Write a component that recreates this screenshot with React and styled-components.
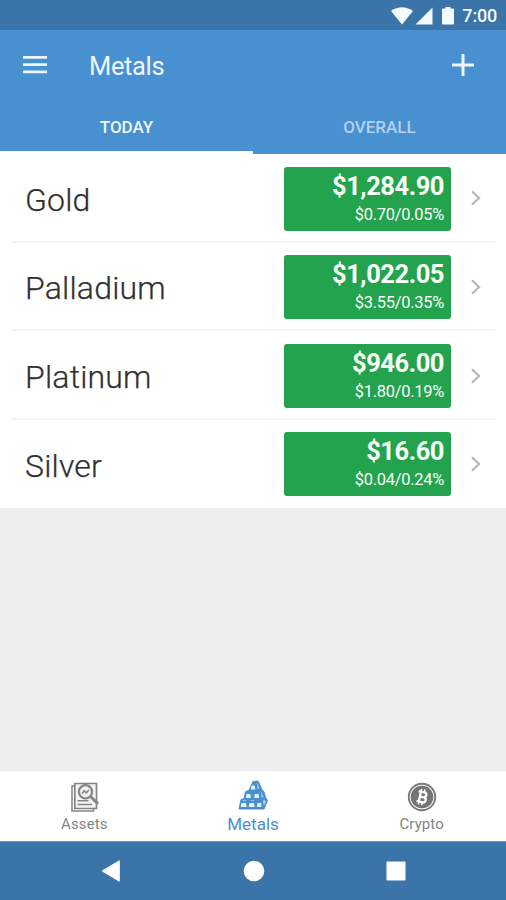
import React, { Component } from 'react';
import styled, { createGlobalStyle } from 'styled-components';

const GlobalStyle = createGlobalStyle`
  * {
    box-sizing: border-box;
  }

  body {
    margin: 0;
    background-color: #eeeeee;
    font-family: Roboto, 'Liberation Sans', sans-serif;
  }
`;

const Screen = styled.div`
  display: flex;
  flex-direction: column;
  width: 506px;
  height: 900px;
  overflow: hidden;
`;

const StatusBar = styled.div`
  display: flex;
  flex: none;
  align-items: center;
  justify-content: flex-end;
  height: 30px;
  padding: 1px 9px 0 0;
  background-color: #3b74a8;
  color: #f4f9fd;
`;

const StatusIcons = styled.svg`
  display: block;
  margin-right: 7px;
`;

const Clock = styled.span`
  font-size: 18px;
  font-weight: 500;
  letter-spacing: -0.2px;
  line-height: 29px;
`;

const Header = styled.header`
  flex: none;
  height: 124px;
  background-color: #4990d1;
  color: #eef6fd;
`;

const Toolbar = styled.div`
  display: flex;
  align-items: center;
  height: 70px;
  padding: 0 32px 0 23px;
`;

const ToolbarButton = styled.button`
  display: flex;
  padding: 0;
  border: 0;
  background: none;
  color: inherit;
`;

const Title = styled.h1`
  flex: 1;
  margin: 1px 0 0 42px;
  font-size: 25.5px;
  font-weight: 400;
  letter-spacing: -0.35px;
  line-height: 32px;
`;

const Tabs = styled.div`
  display: flex;
  height: 54px;
`;

const Tab = styled.button`
  flex: 1;
  padding: 2px 0 0;
  border: 0;
  border-bottom: ${props => (props.$active ? '3px solid #fff' : '3px solid transparent')};
  background: none;
  color: ${props => (props.$active ? '#eef6fd' : '#b0d2f0')};
  font-family: inherit;
  font-size: 17px;
  font-weight: 500;
`;

const List = styled.ul`
  flex: none;
  margin: 0;
  padding: 0 11px 0 12px;
  background-color: #fff;
  list-style: none;
`;

const Row = styled.li`
  display: flex;
  align-items: center;
  height: 88.6px;
  padding: 0 14px 0 13px;
  border-bottom: 2px solid #f5f5f5;

  &:last-child {
    border-bottom-color: transparent;
  }
`;

const Name = styled.span`
  flex: 1;
  margin-top: 5px;
  color: #303030;
  font-size: 32px;
  font-weight: 300;
  letter-spacing: 0.2px;
  line-height: 40px;
  -webkit-text-stroke: 0.25px #303030;
`;

const Badge = styled.div`
  width: 167px;
  height: 64px;
  margin: 2.6px 20px 0 0;
  padding: 4px 7px 0 0;
  border-radius: 3px;
  background-color: #24a34e;
  color: #f8fff9;
  text-align: right;
`;

const Price = styled.div`
  font-size: 25.5px;
  font-weight: 700;
  letter-spacing: -0.45px;
  line-height: 31px;
`;

const Change = styled.div`
  font-size: 16.5px;
  letter-spacing: -0.3px;
  line-height: 25px;
`;

const Chevron = styled.svg`
  display: block;
  margin-top: 2.4px;
`;

const Content = styled.main`
  flex: 1;
  background-color: #eeeeee;
`;

const BottomBar = styled.nav`
  display: flex;
  flex: none;
  height: 70px;
  border-top: 1px solid #f6f6f6;
  background-color: #fff;
`;

const BottomItem = styled.a`
  display: flex;
  flex: 1;
  flex-direction: column;
  align-items: center;
  padding-top: ${props => (props.$active ? '7px' : '10px')};
  color: ${props => (props.$active ? '#4a90d0' : '#858585')};
  font-size: ${props => (props.$active ? '17px' : '15px')};
  letter-spacing: ${props => (props.$active ? '0' : '0.1px')};
  line-height: 22px;

  svg {
    display: block;
  }
`;

const SystemBar = styled.div`
  display: flex;
  flex: none;
  align-items: center;
  justify-content: space-between;
  height: 59px;
  padding: 0 100px 0 101px;
  border-top: 1px solid #6f99bf;
  background-color: #3b74a8;
`;

const metals = [
  { name: 'Gold', price: '$1,284.90', change: '$0.70/0.05%' },
  { name: 'Palladium', price: '$1,022.05', change: '$3.55/0.35%' },
  { name: 'Platinum', price: '$946.00', change: '$1.80/0.19%' },
  { name: 'Silver', price: '$16.60', change: '$0.04/0.24%' }
];

const AssetsIcon = () => (
  <svg width="30" height="31" viewBox="0 0 30 31" fill="none" stroke="#858585">
    <path d="M5.5 4H3v25h21.5v-2.5" strokeWidth="1.5" />
    <path d="M5.8 1.5h21.7v25H5.8z" fill="#f4f4f4" strokeWidth="1.7" />
    <path d="M8.5 18.8h11M8.5 22.5h14.5" strokeWidth="1.6" />
    <circle cx="16.5" cy="9.8" r="6.6" fill="#f1f1f1" strokeWidth="2.2" />
    <path d="M13 11.5l2.3-2.8 2 2.2 2.6-3.2" strokeWidth="1.5" />
    <path d="M21.5 14.5l7.5 7.3" strokeWidth="3" />
  </svg>
);

const MetalsIcon = () => (
  <svg width="32" height="34" viewBox="0 0 32 34">
    <path
      d="M16 2.5l5-.5 4 8.5 2 2.5 1.5 5.5 2 3-3.5 8.5H2L4 20.5l3-.8 1.5-7 3.5-1.5z"
      fill="#4a90d0"
      stroke="#4a90d0"
      strokeLinejoin="round"
    />
    <g fill="#e4f2fc">
      <path d="M4.5 24H9l.6 4H3.8zM12.5 24H17l.6 4h-5.8zM20.5 24H24l.6 4h-4.8z" />
      <path d="M9.5 15h3.8l.6 4H8.9zM17.8 15h3.8l.6 4h-5z" />
      <path d="M14.5 6.5h3.2l.6 4h-4.4z" />
    </g>
    <g fill="#a6cff1">
      <path d="M20 3.5l2.5 6-2 .5zM24 12.5l2.5 5.5-2 .8zM27 20.5l2 2-2 4.5-1.2-4.5z" />
      <path d="M6 21.2h3.5l-.6.9H5.4zM14 21.2h3.5l-.6.9h-3.5z" />
    </g>
  </svg>
);

const CryptoIcon = () => (
  <svg width="30" height="31" viewBox="0 0 30 31" fill="none">
    <circle cx="15" cy="15" r="13.2" stroke="#7a7a7a" strokeWidth="1.9" />
    <circle cx="15" cy="15" r="11.3" fill="#747474" />
    <g transform="rotate(12 15 15)" stroke="#fff" strokeWidth="2.3">
      <path d="M10.5 10h5.8a2.4 2.4 0 0 1 0 5h-3.8 4.3a2.5 2.5 0 0 1 0 5h-6.3M12.8 10v10" />
      <path d="M13 7v3M16.3 7v3M13 20v3M16.3 20v3" strokeWidth="1.6" />
    </g>
  </svg>
);

class App extends Component {
  renderRows() {
    return metals.map(metal => (
      <Row key={metal.name}>
        <Name>{metal.name}</Name>
        <Badge>
          <Price>{metal.price}</Price>
          <Change>{metal.change}</Change>
        </Badge>
        <Chevron width="10" height="16" viewBox="0 0 10 16" fill="none">
          <path d="M1 1.2L8 8l-7 6.8" stroke="#b8b8b8" strokeWidth="2.3" />
        </Chevron>
      </Row>
    ));
  }

  render() {
    return (
      <Screen>
        <GlobalStyle />
        <StatusBar>
          <StatusIcons width="64" height="20" viewBox="0 0 64 20" fill="currentColor">
            <path d="M0 5Q11 -2.5 22 5L11 18.5z" />
            <path d="M41.5 1.5v17h-17z" />
            <path d="M54.5 1h5v1.5H62a1 1 0 0 1 1 1V17.5a1 1 0 0 1-1 1H52a1 1 0 0 1-1-1V3.5a1 1 0 0 1 1-1h2.5z" />
          </StatusIcons>
          <Clock>7:00</Clock>
        </StatusBar>
        <Header>
          <Toolbar>
            <ToolbarButton aria-label="Menu">
              <svg width="24" height="18" viewBox="0 0 24 18" fill="currentColor">
                <path d="M0 0h24v2.7H0zM0 7.3h24V10H0zM0 14.6h24v2.7H0z" />
              </svg>
            </ToolbarButton>
            <Title>Metals</Title>
            <ToolbarButton aria-label="Add">
              <svg width="22" height="22" viewBox="0 0 22 22" fill="currentColor">
                <path d="M9.5 0h3v9.5H22v3h-9.5V22h-3v-9.5H0v-3h9.5z" />
              </svg>
            </ToolbarButton>
          </Toolbar>
          <Tabs>
            <Tab $active>TODAY</Tab>
            <Tab>OVERALL</Tab>
          </Tabs>
        </Header>
        <List>{this.renderRows()}</List>
        <Content />
        <BottomBar>
          <BottomItem>
            <AssetsIcon />
            Assets
          </BottomItem>
          <BottomItem $active>
            <MetalsIcon />
            Metals
          </BottomItem>
          <BottomItem>
            <CryptoIcon />
            Crypto
          </BottomItem>
        </BottomBar>
        <SystemBar>
          <svg width="20" height="22" viewBox="0 0 20 22" fill="#fff">
            <path d="M18.3.8v20.4L1.2 11z" stroke="#fff" strokeLinejoin="round" />
          </svg>
          <svg width="22" height="22" viewBox="0 0 22 22" fill="#fff">
            <circle cx="11" cy="11" r="10.3" />
          </svg>
          <svg width="20" height="20" viewBox="0 0 20 20" fill="#fff">
            <rect x="0.5" y="0.5" width="19" height="19" rx="1" />
          </svg>
        </SystemBar>
      </Screen>
    );
  }
}

export default App;
